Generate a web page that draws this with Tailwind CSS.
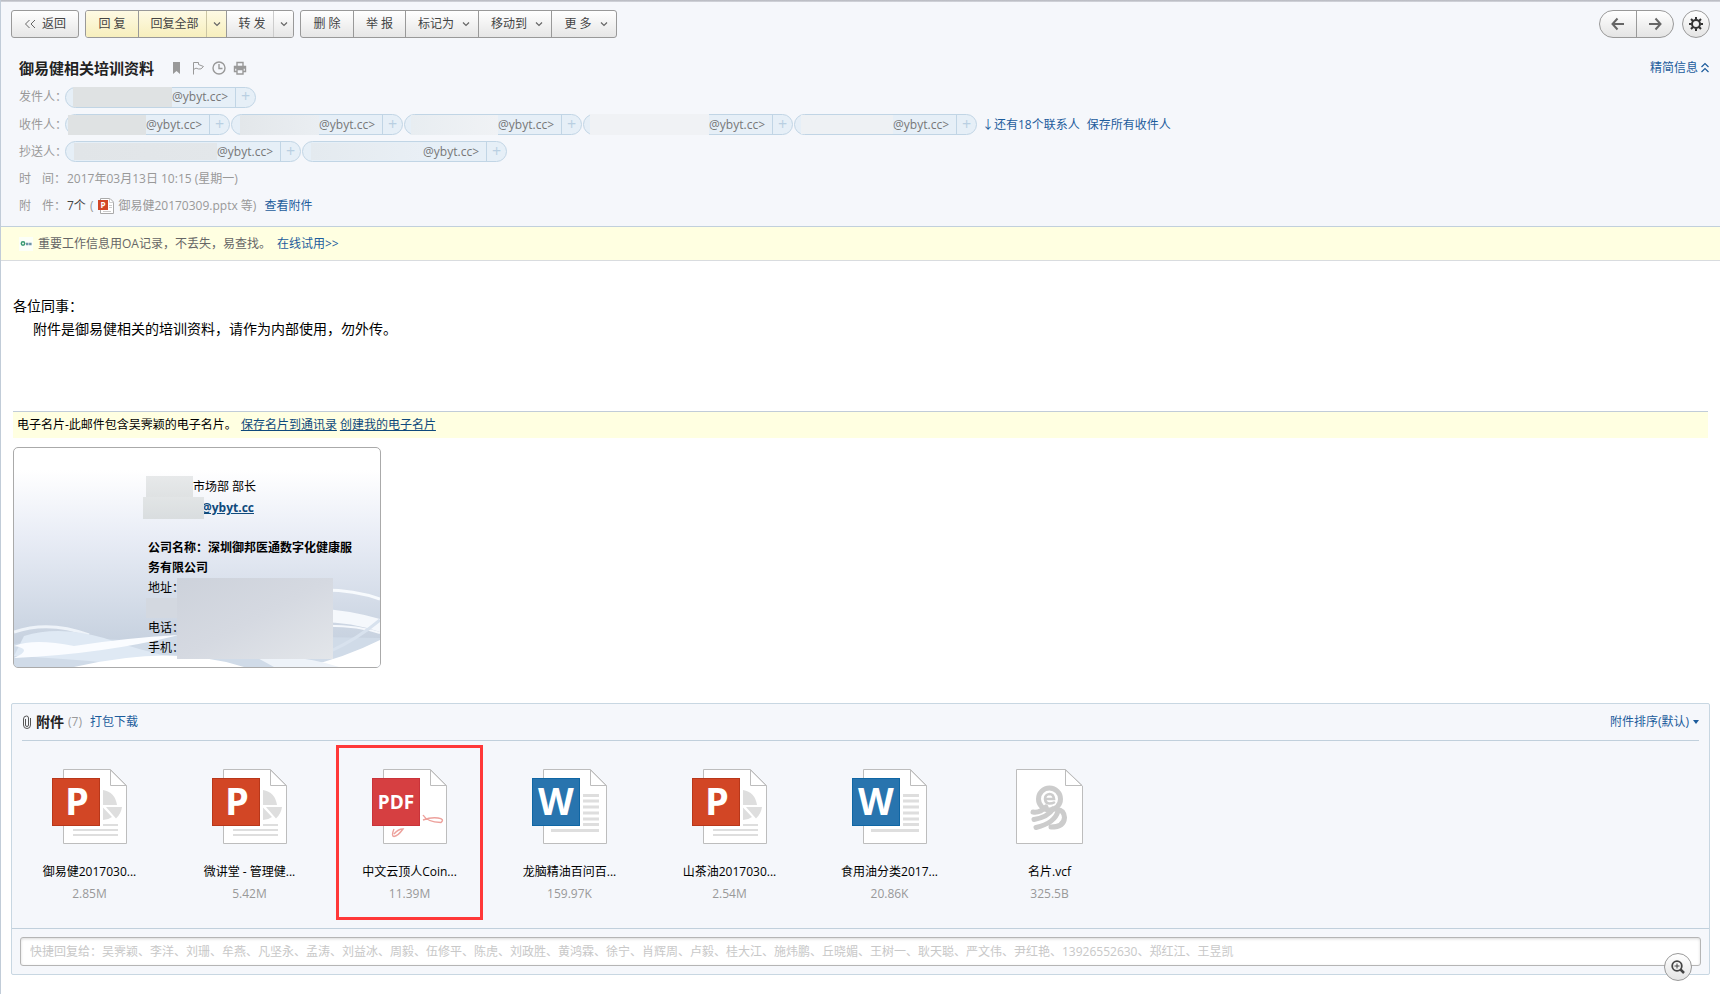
<!DOCTYPE html>
<html lang="zh-CN">
<head>
<meta charset="utf-8">
<title>御易健相关培训资料</title>
<script src="https://cdn.jsdelivr.net/npm/@tailwindcss/browser@4"></script>
</head>
<body class="min-h-screen border-l border-[#c1ccd8] bg-white font-['Open_Sans','Noto_Sans_CJK_SC',sans-serif] text-xs text-black">

<svg class="hidden" aria-hidden="true">
  <defs>
    <linearGradient id="fold" x1="0" y1="0" x2="0" y2="1"><stop offset="0" stop-color="#fff"/><stop offset="1" stop-color="#dedede"/></linearGradient>
    <symbol id="page" viewBox="0 0 76 76">
      <path d="M11.500 .5H58L74.500 17V74.500H11.500Z" fill="#fff" stroke="#bdbdbd" stroke-linejoin="round"/>
      <path d="M58.500 .5V16.500H74.500Z" fill="url(#fold)" stroke="#bdbdbd" stroke-linejoin="round"/>
    </symbol>
    <symbol id="ppt" viewBox="0 0 76 76">
      <use href="#page" width="76" height="76"/>
      <path d="M51 21Q63 23 65 36H51ZM54 38H70Q69 45 64 49.500ZM51 38.500L60 48Q56 51 51 51Z" fill="#dedede"/>
      <path d="M51 56H66M21 61H66M21 66H66" stroke="#dedede" stroke-width="2"/>
      <rect x=".5" y="9.500" width="47" height="47" fill="#d24625" stroke="#b8371a"/>
      <text x="25" y="46" text-anchor="middle" font-family="Open Sans" font-weight="700" font-size="38" fill="#fff">P</text>
    </symbol>
    <symbol id="doc" viewBox="0 0 76 76">
      <use href="#page" width="76" height="76"/>
      <path d="M51 26.500H67M51 32H67M51 38H67M51 44H67M51 50H67M51 55.500H67M19 61.500H67" stroke="#dedede" stroke-width="3"/>
      <rect x=".5" y="9.500" width="47" height="47" fill="#2874ae" stroke="#0f66a4"/>
      <text x="24" y="46" text-anchor="middle" font-family="Open Sans" font-weight="700" font-size="37" fill="#fff">W</text>
    </symbol>
    <symbol id="pdf" viewBox="0 0 76 76">
      <use href="#page" width="76" height="76"/>
      <g fill="none" stroke="#eda19c" stroke-width="1.400"><path d="M51 46Q55 53 69 53.500Q73 50 66 49Q59 48 51 51"/><path d="M22 60Q19 67 22 67.500Q26 67 31 60Q26 60 22 65"/></g>
      <rect x=".5" y="9.500" width="47" height="47" fill="#d63f41" stroke="#c9333a"/>
      <text x="24" y="40" text-anchor="middle" font-family="Open Sans" font-weight="700" font-size="19" fill="#fff">PDF</text>
    </symbol>
    <symbol id="vcf" viewBox="0 0 76 76">
      <path d="M4.500 .5H53L70.500 17V74.500H4.500Z" fill="#fff" stroke="#bdbdbd" stroke-linejoin="round"/>
      <path d="M53.500 .5V16.500H70Z" fill="url(#fold)" stroke="#bdbdbd" stroke-linejoin="round"/>
      <g fill="none" stroke="#ccc" stroke-linecap="round">
        <circle cx="37.500" cy="30" r="11" stroke-width="5"/>
        <path d="M33.500 30H42Q41.500 25 37.500 25Q33 25.500 33 30Q33.500 34.500 37.500 34.500Q40.500 34.500 42 33.500" stroke-width="2.600"/>
        <path d="M21 43Q28 44 34 38M22 50.500Q36 48 41 40M24 58.500Q43 54 46 42M39 58Q52 58 52.500 48.500Q52 41 45 40.500" stroke-width="5"/>
      </g>
    </symbol>
    <symbol id="chev" viewBox="0 0 8 8"><path d="M1 2.500L4 5.500L7 2.500" fill="none" stroke="#666" stroke-width="1.200"/></symbol>
  </defs>
</svg>

<header class="border-b border-[#c1d0dc] bg-[#f5f7fb] pb-[7px]">
  <div class="h-0.5 bg-linear-to-b from-[#b4b6bd] to-[#d6d8de]"></div>

  <!-- Toolbar -->
  <div class="flex items-center justify-between pt-2 pr-2.5 pl-2.5 text-[#444]">
    <div class="flex h-7 gap-1.5">
      <button class="flex w-[68px] items-center justify-center gap-1.5 rounded-[3px] border border-[#999] bg-linear-to-b from-white to-[#e6e6e6]">
        <svg class="h-3 w-3" viewBox="0 0 12 12" fill="none" stroke="#666"><path d="M5.500 2L1.500 6L5.500 10M11 2L7 6L11 10"/></svg>返回</button>
      <div class="flex overflow-hidden rounded-[3px] border border-[#999]">
        <button class="w-[53px] border-r border-[#999] bg-linear-to-b from-[#fefae4] to-[#f7efbd]">回 复</button>
        <button class="w-[68px] border-r border-[#ccc6a4] bg-linear-to-b from-[#fefae4] to-[#f7efbd] pl-1">回复全部</button>
        <button aria-label="回复全部选项" class="flex w-5 items-center justify-center border-r border-[#999] bg-linear-to-b from-[#fefae4] to-[#f7efbd]"><svg class="h-2 w-2"><use href="#chev"/></svg></button>
        <button class="w-[47px] border-r border-[#ccc] bg-linear-to-b from-white to-[#e6e6e6] pl-1">转 发</button>
        <button aria-label="转发选项" class="flex w-[19px] items-center justify-center bg-linear-to-b from-white to-[#e6e6e6]"><svg class="h-2 w-2"><use href="#chev"/></svg></button>
      </div>
      <div class="flex overflow-hidden rounded-[3px] border border-[#999] bg-linear-to-b from-white to-[#e6e6e6]">
        <button class="w-[53px] border-r border-[#999]">删 除</button>
        <button class="w-[52px] border-r border-[#999]">举 报</button>
        <button class="flex w-[73px] items-center justify-center gap-2 border-r border-[#999] pl-1">标记为<svg class="h-2 w-2"><use href="#chev"/></svg></button>
        <button class="flex w-[73px] items-center justify-center gap-2 border-r border-[#999] pl-1">移动到<svg class="h-2 w-2"><use href="#chev"/></svg></button>
        <button class="flex w-16 items-center justify-center gap-2 pl-1">更 多<svg class="h-2 w-2"><use href="#chev"/></svg></button>
      </div>
    </div>
    <div class="flex h-7 gap-2">
      <div class="flex w-[75px] overflow-hidden rounded-full border border-[#999] bg-linear-to-b from-white to-[#e4e4e4]">
        <button aria-label="上一封" class="flex flex-1 items-center justify-center border-r border-[#999]"><svg class="h-4 w-4" viewBox="0 0 16 16" fill="none" stroke="#666" stroke-width="2"><path d="M14 8H3M7.500 2.500L2.500 8L7.500 13.500"/></svg></button>
        <button aria-label="下一封" class="flex flex-1 items-center justify-center"><svg class="h-4 w-4" viewBox="0 0 16 16" fill="none" stroke="#666" stroke-width="2"><path d="M2 8H13M8.500 2.500L13.500 8L8.500 13.500"/></svg></button>
      </div>
      <button aria-label="设置" class="flex w-7 items-center justify-center rounded-full border border-[#999] bg-linear-to-b from-white to-[#e4e4e4]">
        <svg class="h-3.5 w-3.5" viewBox="0 0 14 14" fill="none" stroke="#333" stroke-width="2"><circle cx="7" cy="7" r="4"/><path d="M7 0V2.500M7 11.500V14M0 7H2.500M11.500 7H14M2 2L4 4M10 10L12 12M12 2L10 4M4 10L2 12"/></svg>
      </button>
    </div>
  </div>

  <!-- Subject -->
  <div class="mt-[19px] flex h-[22px] items-center justify-between pr-2.5 pl-[18px]">
    <div class="flex items-center">
      <h1 class="mr-4 text-[15px] font-bold text-[#222]">御易健相关培训资料</h1>
      <div class="flex items-center gap-[7px] text-[#999]">
        <svg class="h-3.5 w-3.5" viewBox="0 0 14 14" fill="#999"><path d="M3 1H10V13L6.500 10L3 13Z"/></svg>
        <svg class="h-3.5 w-3.5" viewBox="0 0 14 14" fill="none" stroke="#999"><path d="M2.500 13.500V1.500H7.500V3.500L12.500 5.500Q10 9 7.500 8Q5 6 2.500 8.500"/></svg>
        <svg class="h-3.5 w-3.5" viewBox="0 0 14 14" fill="none" stroke="#999" stroke-width="1.400"><circle cx="7" cy="7" r="6"/><path d="M7 3V7.500H10.500"/></svg>
        <svg class="h-3.5 w-3.5" viewBox="0 0 14 14" fill="none" stroke="#999" stroke-width="1.400"><path d="M4 5V1.500H10V5M3.500 10.500H1.500V5.500H12.500V10.500H10.500M4 8.500H10V13H4ZM2 7H12"/></svg>
      </div>
    </div>
    <a href="#" class="flex items-center gap-0.5 text-[#1c5c9c]">精简信息<svg class="h-3 w-2.5" viewBox="0 0 10 12" fill="none" stroke="#1c5c9c" stroke-width="1.200"><path d="M1.500 5L5 1.500L8.500 5M1.500 10L5 6.500L8.500 10"/></svg></a>
  </div>

  <!-- Envelope details -->
  <dl class="mt-1 pl-[18px] whitespace-nowrap text-[#999]">
    <div class="flex h-7 items-center">
      <dt class="w-[46px]">发件人：</dt>
      <dd class="flex gap-px text-[#777]">
        <span class="flex h-[21px] w-[191px] items-center rounded-full border border-[#c1d5e5] bg-[#e6eff7] pl-[7px]"><i class="h-5 flex-1 bg-[#dfe2e3]"></i><span class="pr-[7px]">@ybyt.cc&gt;</span><button aria-label="添加联系人" class="h-full w-5 border-l border-[#c1d5e5] pb-0.5 text-base leading-none text-[#b9cfe2]">+</button></span>
      </dd>
    </div>
    <div class="flex h-[27px] items-center">
      <dt class="w-[46px]">收件人：</dt>
      <dd class="flex items-center gap-px text-[#777]">
        <span class="flex h-[21px] w-[165px] items-center rounded-full border border-[#c1d5e5] bg-[#e6eff7] pl-0.5"><i class="-my-px h-5 flex-1 bg-[#dfe2e3]"></i><span class="pr-[7px]">@ybyt.cc&gt;</span><button aria-label="添加联系人" class="h-full w-5 border-l border-[#c1d5e5] pb-0.5 text-base leading-none text-[#b9cfe2]">+</button></span>
        <span class="flex h-[21px] w-[172px] items-center rounded-full border border-[#c1d5e5] bg-[#e6eff7] pl-2"><i class="-my-px h-5 flex-1 bg-linear-to-r from-[#e3e7ea] to-[#eaeef2]"></i><span class="pr-[7px]">@ybyt.cc&gt;</span><button aria-label="添加联系人" class="h-full w-5 border-l border-[#c1d5e5] pb-0.5 text-base leading-none text-[#b9cfe2]">+</button></span>
        <span class="flex h-[21px] w-[178px] items-center rounded-full border border-[#c1d5e5] bg-[#e6eff7] pl-1.5"><i class="h-5 flex-1 bg-linear-to-r from-[#e8edf1] to-[#f0f2f5]"></i><span class="pr-[7px]">@ybyt.cc&gt;</span><button aria-label="添加联系人" class="h-full w-5 border-l border-[#c1d5e5] pb-0.5 text-base leading-none text-[#b9cfe2]">+</button></span>
        <span class="flex h-[21px] w-[210px] items-center rounded-full border border-[#c1d5e5] bg-[#e6eff7] pl-1.5"><i class="-my-px h-[21px] flex-1 bg-[#f0f2f5]"></i><span class="pr-[7px]">@ybyt.cc&gt;</span><button aria-label="添加联系人" class="h-full w-5 border-l border-[#c1d5e5] pb-0.5 text-base leading-none text-[#b9cfe2]">+</button></span>
        <span class="flex h-[21px] w-[183px] items-center rounded-full border border-[#c1d5e5] bg-[#e6eff7] pl-1.5"><i class="h-[19px] flex-1 bg-[#eef1f4]"></i><span class="pr-[7px]">@ybyt.cc&gt;</span><button aria-label="添加联系人" class="h-full w-5 border-l border-[#c1d5e5] pb-0.5 text-base leading-none text-[#b9cfe2]">+</button></span>
        <a href="#" class="ml-1 text-[#1c5c9c]">↓还有18个联系人</a>
        <a href="#" class="ml-1.5 text-[#1c5c9c]">保存所有收件人</a>
      </dd>
    </div>
    <div class="flex h-[27px] items-center">
      <dt class="w-[46px]">抄送人：</dt>
      <dd class="flex gap-px text-[#777]">
        <span class="flex h-[21px] w-[236px] items-center rounded-full border border-[#c1d5e5] bg-[#e6eff7] pl-2"><i class="h-[17px] flex-1 bg-linear-to-r from-[#e1e5e8] to-[#e3e7ea]"></i><span class="pr-[7px]">@ybyt.cc&gt;</span><button aria-label="添加联系人" class="h-full w-5 border-l border-[#c1d5e5] pb-0.5 text-base leading-none text-[#b9cfe2]">+</button></span>
        <span class="flex h-[21px] w-[205px] items-center rounded-full border border-[#c1d5e5] bg-[#e6eff7] pl-2"><i class="h-[17px] flex-1 bg-linear-to-r from-[#e4eaef] to-[#e9eff5]"></i><span class="pr-[7px]">@ybyt.cc&gt;</span><button aria-label="添加联系人" class="h-full w-5 border-l border-[#c1d5e5] pb-0.5 text-base leading-none text-[#b9cfe2]">+</button></span>
      </dd>
    </div>
    <div class="flex h-7 items-center">
      <dt class="flex w-12 gap-[11px]"><span>时</span><span>间：</span></dt>
      <dd>2017年03月13日 10:15 (星期一)</dd>
    </div>
    <div class="flex h-[26px] items-center">
      <dt class="flex w-12 gap-[11px]"><span>附</span><span>件：</span></dt>
      <dd class="flex items-center"><span class="text-[#444]">7个</span><span class="mx-1">(</span>
        <svg class="mr-1 ml-px h-4 w-4" viewBox="0 0 16 16"><path d="M2.500 .5H12L15.500 4V15.500H2.500Z" fill="#fff" stroke="#aaa"/><path d="M11.500 .5V4.500H15.500M11 7.500H14M11 9.500H14M5 13.500H13" fill="none" stroke="#ccc"/><rect y="2" width="10" height="10" fill="#d24625"/><text x="5" y="10" text-anchor="middle" font-family="Open Sans" font-weight="700" font-size="8" fill="#fff">P</text></svg>
        御易健20170309.pptx 等) <a href="#" class="ml-2 text-[#1c5c9c]">查看附件</a></dd>
    </div>
  </dl>
</header>

<!-- Promotion strip -->
<div class="flex h-[34px] items-center border-b border-[#d9dcdf] bg-[#ffffe1] pl-[18px] text-[#666]">
  <svg class="mr-[5px] h-3.5 w-3.5" viewBox="0 0 14 14"><path d="M0 0H14V14H0Z" fill="#fcfff8"/><circle cx="4" cy="6.500" r="1.700" fill="none" stroke="#3b9a72" stroke-width="1.500"/><path d="M7 7H13" stroke="#6f93a8" stroke-width="2.500" stroke-dasharray="2.500 .6"/></svg>
  重要工作信息用OA记录，不丢失，易查找。<a href="#" class="ml-1.5 text-[#1c5c9c]">在线试用&gt;&gt;</a>
</div>

<main class="pr-2.5 pl-2.5">
  <div class="mr-0.5 ml-0.5">
    <div class="h-[150px] pt-[33px] text-sm leading-[23px]">
      <p>各位同事：</p>
      <p class="pl-5">附件是御易健相关的培训资料，请作为内部使用，勿外传。</p>
    </div>
    <div class="flex h-[27px] items-center border-t border-[#c1ccd8] bg-[#ffffe1] pl-1">
      电子名片-此邮件包含吴霁颖的电子名片。<a href="#" class="ml-1 text-[#0f4a7c] underline">保存名片到通讯录</a><a href="#" class="ml-[3px] text-[#0f4a7c] underline">创建我的电子名片</a>
    </div>

    <!-- Business card -->
    <section class="relative mt-[9px] h-[221px] w-[368px] overflow-hidden rounded-[5px] border border-[#aaa] bg-linear-to-b from-white from-10% via-[#e9edf6] via-40% to-[#bfcbda]">
      <svg class="absolute inset-0 h-full w-full" viewBox="0 0 366 219" preserveAspectRatio="none" fill="none">
        <path d="M0 196Q60 188 110 192Q180 184 240 188L366 190V219H0Z" fill="#d0dbe8"/>
        <path d="M0 184Q35 172 75 187" stroke="#eef3f9" stroke-width="3"/>
        <path d="M10 188Q45 177 90 190Q130 204 200 219H130Q80 212 0 208Z" fill="#dfe9f4"/>
        <path d="M0 198Q20 190 60 198Q110 190 165 187Q90 206 0 210Q20 201 0 198Z" fill="#fafcff"/>
        <path d="M60 219Q160 196 230 219ZM290 219Q330 210 366 192V219Z" fill="#fff"/>
        <path d="M240 208Q290 207 325 219H260Z" fill="#eef3f9"/>
        <path d="M310 142Q340 142 366 151" stroke="#f7fafd" stroke-width="3"/>
        <path d="M300 160Q335 162 366 171V184Q335 173 300 174Z" fill="#f5f8fc"/>
        <path d="M300 178Q340 176 366 185" stroke="#f5f8fc" stroke-width="2"/>
        <path d="M315 204Q345 190 366 172" stroke="#d8e2ee" stroke-width="3"/>
      </svg>
      <div class="relative pt-7 pl-[129px] leading-5">
        <div class="flex items-center"><i class="ml-[3px] h-[21px] w-[47px] bg-linear-to-b from-[#e7e9ea] to-[#dfe2e3]"></i>市场部 部长</div>
        <div class="flex items-center"><i class="z-10 h-[22px] w-[61px] bg-linear-to-b from-[#e2e5e6] to-[#d9dddf]"></i><a href="#" class="-ml-[3px] font-bold text-[#0f4a7c] underline">@ybyt.cc</a></div>
        <p class="mt-[19px] ml-[5px] w-[210px] font-bold">公司名称：深圳御邦医通数字化健康服务有限公司</p>
        <div class="ml-[5px] flex">
          <div><p>地址：</p><i class="-ml-0.5 block h-5 w-[41px] bg-[#d3d8e0]"></i><p>电话：</p><p>手机：</p></div>
          <i class="-ml-2.5 h-[81px] w-[156px] bg-linear-to-br from-[#cdd2db] via-[#d5d9e1] to-[#e3e6ea]"></i>
        </div>
      </div>
    </section>
  </div>

  <!-- Attachments -->
  <section class="relative mt-[35px] rounded-xs border border-[#c8d7e2] bg-[#f5f7fb]">
    <div class="mx-2.5 flex h-[37px] items-center justify-between border-b border-[#c1d0dc]">
      <div class="flex items-center">
        <svg class="mr-1 h-3.5 w-2.5" viewBox="0 0 10 14" fill="none" stroke="#555"><path d="M3.500 4V10Q3.500 11.500 5 11.500Q6.500 11.500 6.500 10V3Q6.500 1 4.500 1Q1.500 1 1.500 4V10Q1.500 13.500 5 13.500Q8.500 13.500 8.500 10V3"/></svg>
        <h2 class="text-sm font-bold text-[#222]">附件</h2><span class="ml-1 text-[#999]">(7)</span><a href="#" class="ml-2 text-[#1c5c9c]">打包下载</a>
      </div>
      <button class="flex items-center gap-1 text-[#1c5c9c]">附件排序(默认)<svg class="h-1 w-1.5" viewBox="0 0 6 4"><path d="M0 0H6L3 4Z" fill="#1c5c9c"/></svg></button>
    </div>
    <ul class="flex h-[187px] pt-1 text-center">
      <li class="ml-1 w-[147px] border-[3px] border-transparent pt-[21px]"><svg class="mx-auto h-[76px] w-[76px]"><use href="#ppt"/></svg><p class="mt-[17px] leading-5">御易健2017030...</p><p class="mt-0.5 leading-5 text-[#999]">2.85M</p></li>
      <li class="ml-[13px] w-[147px] border-[3px] border-transparent pt-[21px]"><svg class="mx-auto h-[76px] w-[76px]"><use href="#ppt"/></svg><p class="mt-[17px] leading-5">微讲堂 - 管理健...</p><p class="mt-0.5 leading-5 text-[#999]">5.42M</p></li>
      <li class="ml-[13px] h-[175px] w-[147px] border-[3px] border-[#ff3838] pt-[21px]"><svg class="mx-auto h-[76px] w-[76px]"><use href="#pdf"/></svg><p class="mt-[17px] leading-5">中文云顶人Coin...</p><p class="mt-0.5 leading-5 text-[#999]">11.39M</p></li>
      <li class="ml-[13px] w-[147px] border-[3px] border-transparent pt-[21px]"><svg class="mx-auto h-[76px] w-[76px]"><use href="#doc"/></svg><p class="mt-[17px] leading-5">龙脑精油百问百...</p><p class="mt-0.5 leading-5 text-[#999]">159.97K</p></li>
      <li class="ml-[13px] w-[147px] border-[3px] border-transparent pt-[21px]"><svg class="mx-auto h-[76px] w-[76px]"><use href="#ppt"/></svg><p class="mt-[17px] leading-5">山茶油2017030...</p><p class="mt-0.5 leading-5 text-[#999]">2.54M</p></li>
      <li class="ml-[13px] w-[147px] border-[3px] border-transparent pt-[21px]"><svg class="mx-auto h-[76px] w-[76px]"><use href="#doc"/></svg><p class="mt-[17px] leading-5">食用油分类2017...</p><p class="mt-0.5 leading-5 text-[#999]">20.86K</p></li>
      <li class="ml-[13px] w-[147px] border-[3px] border-transparent pt-[21px]"><svg class="mx-auto h-[76px] w-[76px]"><use href="#vcf"/></svg><p class="mt-[17px] leading-5">名片.vcf</p><p class="mt-0.5 leading-5 text-[#999]">325.5B</p></li>
    </ul>
    <div class="border-t border-[#c1d0dc] px-2 py-2">
      <input type="text" aria-label="快捷回复" placeholder="快捷回复给：吴霁颖、李洋、刘珊、牟燕、凡坚永、孟涛、刘益冰、周毅、伍修平、陈虎、刘政胜、黄鸿霖、徐宁、肖辉周、卢毅、桂大江、施炜鹏、丘晓媚、王树一、耿天聪、严文伟、尹红艳、13926552630、郑红江、王昱凯" class="block h-[29px] w-full rounded-[3px] border border-[#b5b5b5] bg-white px-[9px] shadow-[inset_0_1px_3px_rgba(0,0,0,0.15)] placeholder:text-[#c8c8c8]">
    </div>
    <button aria-label="放大" class="absolute right-[17px] -bottom-[7px] flex h-7 w-7 items-center justify-center rounded-full border border-[#999] bg-linear-to-b from-white to-[#e4e4e4]">
      <svg class="h-3.5 w-3.5" viewBox="0 0 14 14" fill="none" stroke="#444"><circle cx="6" cy="6" r="4.800" stroke-width="1.800"/><path d="M9.500 9.500L13 13" stroke-width="2.500"/><path d="M3.500 6H8.500M6 3.500V8.500"/></svg>
    </button>
  </section>
</main>
</body>
</html>
